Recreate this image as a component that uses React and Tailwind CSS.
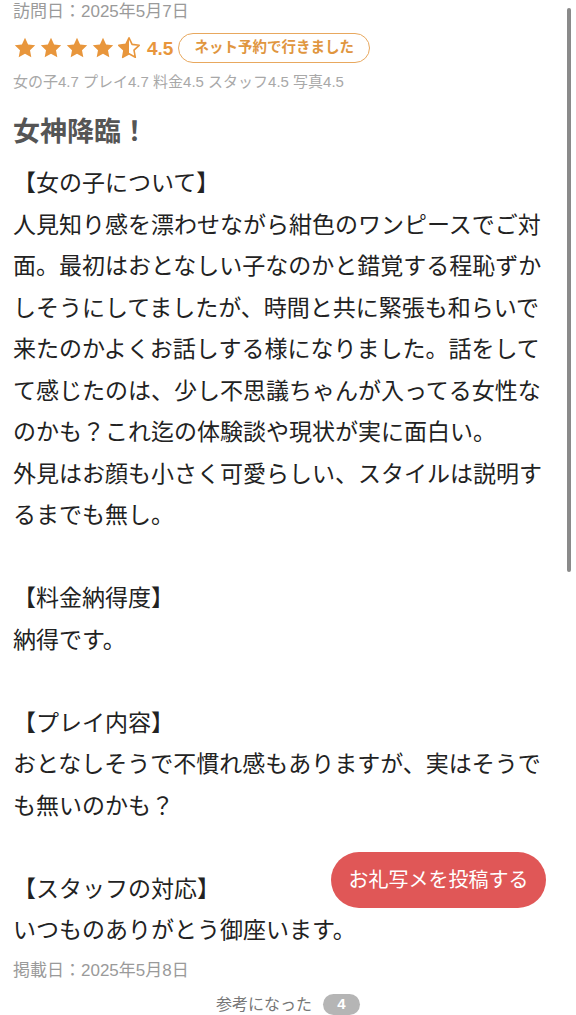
import React from 'react'

const STAR = 'M12 1.8l3.1 6.6 7.1.9-5.2 4.9 1.3 7.1L12 17.8l-6.3 3.5 1.3-7.1L1.8 9.3l7.1-.9z'

const Star = ({ half }) => (
  <svg width="24" height="24" viewBox="0 0 24 24" className="shrink-0">
    {half ? (
      <>
        <defs>
          <clipPath id="halfclip">
            <rect x="0" y="0" width="12" height="24" />
          </clipPath>
        </defs>
        <path d={STAR} fill="none" stroke="#e8963c" strokeWidth="1.6" strokeLinejoin="round" />
        <path d={STAR} fill="#e8963c" clipPath="url(#halfclip)" />
      </>
    ) : (
      <path d={STAR} fill="#e8963c" />
    )}
  </svg>
)

const body = `【女の子について】
人見知り感を漂わせながら紺色のワンピースでご対面。最初はおとなしい子なのかと錯覚する程恥ずかしそうにしてましたが、時間と共に緊張も和らいで来たのかよくお話しする様になりました。話をしてて感じたのは、少し不思議ちゃんが入ってる女性なのかも？これ迄の体験談や現状が実に面白い。
外見はお顔も小さく可愛らしい、スタイルは説明するまでも無し。

【料金納得度】
納得です。

【プレイ内容】
おとなしそうで不慣れ感もありますが、実はそうでも無いのかも？

【スタッフの対応】
いつものありがとう御座います。`

export default function App() {
  return (
    <div
      className="relative w-[576px] h-[1015px] overflow-hidden bg-white"
      style={{ fontFamily: '"Liberation Sans", "Noto Sans CJK JP", sans-serif' }}
    >
      <div className="px-[13px] pt-[1px]">
        {/* 訪問日 */}
        <div className="text-[17px] leading-[22px] text-[#9a9a9a]">訪問日：2025年5月7日</div>

        {/* 評価 */}
        <div className="mt-[10px] flex items-center h-[30px]">
          <div className="flex items-center gap-[2px]">
            <Star />
            <Star />
            <Star />
            <Star />
            <Star half />
          </div>
          <span className="ml-[6px] text-[19px] font-bold text-[#e8963c] leading-none">4.5</span>
          <span className="ml-[5px] h-[30px] px-[15px] flex items-center rounded-full border-[1.5px] border-[#e8a85e] text-[14.5px] font-bold text-[#e0963f]">
            ネット予約で行きました
          </span>
        </div>

        <div className="mt-[9px] text-[15px] leading-[20px] text-[#a8a8a8]">
          女の子4.7 プレイ4.7 料金4.5 スタッフ4.5 写真4.5
        </div>

        {/* タイトル */}
        <h2 className="mt-[22px] text-[27px] leading-[36px] font-bold text-[#555555]">女神降臨！</h2>

        {/* 本文 */}
        <p className="mt-[13px] w-[535px] text-[23px] leading-[41.5px] text-[#222222] whitespace-pre-line">{body}</p>

        <div className="mt-[8px] text-[17px] leading-[22px] text-[#9a9a9a]">掲載日：2025年5月8日</div>

        <div className="mt-[12px] flex items-center justify-center gap-[11px]">
          <span className="text-[16px] leading-[22px] text-[#777777]">参考になった</span>
          <span className="w-[37px] h-[21px] rounded-full bg-[#b5b5b5] text-white text-[15px] font-bold flex items-center justify-center">4</span>
        </div>
      </div>

      {/* 投稿ボタン */}
      <button className="absolute left-[331px] top-[852px] w-[215px] h-[56px] rounded-full bg-[#e05757] text-white text-[20px] flex items-center justify-center">
        お礼写メを投稿する
      </button>

      {/* スクロールバー */}
      <div className="absolute left-[567px] top-[8px] w-[4px] h-[564px] rounded-full bg-[#8a8a8a]" />
    </div>
  )
}
